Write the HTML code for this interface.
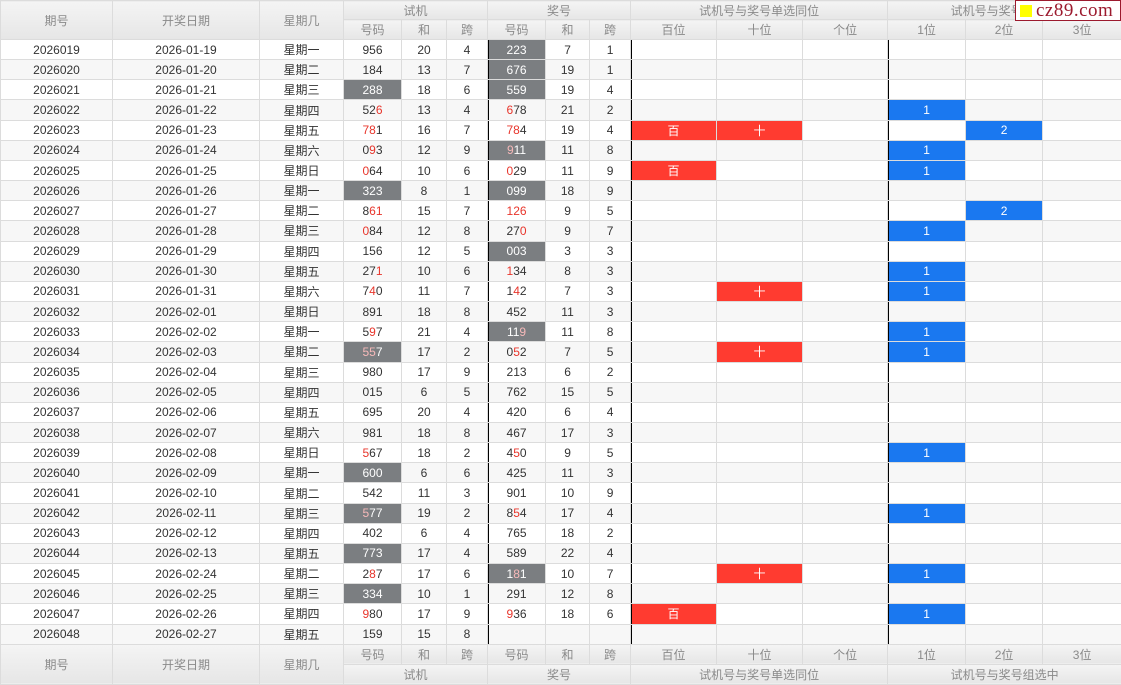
<!DOCTYPE html>
<html><head><meta charset="utf-8"><style>
*{margin:0;padding:0;box-sizing:border-box}
body{width:1121px;height:684px;overflow:hidden;background:#fff;font-family:"Liberation Sans","Noto Sans CJK SC",sans-serif;font-size:12px;color:#333;position:relative}
table{border-collapse:collapse;table-layout:fixed;width:1121px}
td,th{border:1px solid #dcdcdc;text-align:center;padding:0;white-space:nowrap;overflow:hidden}
th{background:linear-gradient(#f4f4f4,#e6e6e6);color:#8a8a8a;font-weight:normal;font-size:12px}
thead tr.a th{height:19px}
thead tr.b th{height:20px}
tbody tr{height:20.17px}
tbody tr:nth-child(even) td{background:#f7f7f7}
tfoot tr th{height:20px}
tbody td.g{background:#7b7e81!important;color:#fff}
tbody td.R{background:#ff3b30!important;color:#fff}
tbody td.B{background:#1a78f0!important;color:#fff}
.r{color:#e8352b}
td.g .r{color:#f7b9b9}
td.k{box-shadow:inset 1px 0 0 #000}
#wm{position:absolute;left:1015px;top:0;width:106px;height:21px;background:#fff;border:1px solid #9c1a2e;font-family:"Liberation Serif",serif;font-size:19px;color:#9c1a2e;line-height:19px;padding-left:20px;letter-spacing:0.5px}
#wm i{position:absolute;left:4px;top:4px;width:12px;height:12px;background:#ff0}
</style></head><body>
<table>
<colgroup><col style="width:112px"><col style="width:147px"><col style="width:84px"><col style="width:58px"><col style="width:45px"><col style="width:41px"><col style="width:58px"><col style="width:44px"><col style="width:41px"><col style="width:86px"><col style="width:86px"><col style="width:85px"><col style="width:78px"><col style="width:77px"><col style="width:79px"></colgroup>
<thead>
<tr class="a"><th rowspan="2">期号</th><th rowspan="2">开奖日期</th><th rowspan="2">星期几</th><th colspan="3">试机</th><th colspan="3">奖号</th><th colspan="3">试机号与奖号单选同位</th><th colspan="3">试机号与奖号组选中</th></tr>
<tr class="b"><th>号码</th><th>和</th><th>跨</th><th>号码</th><th>和</th><th>跨</th><th>百位</th><th>十位</th><th>个位</th><th>1位</th><th>2位</th><th>3位</th></tr>
</thead>
<tbody>
<tr><td>2026019</td><td>2026-01-19</td><td>星期一</td><td>956</td><td>20</td><td>4</td><td class="k g">223</td><td>7</td><td>1</td><td class="k"></td><td></td><td></td><td class="k"></td><td></td><td></td></tr>
<tr><td>2026020</td><td>2026-01-20</td><td>星期二</td><td>184</td><td>13</td><td>7</td><td class="k g">676</td><td>19</td><td>1</td><td class="k"></td><td></td><td></td><td class="k"></td><td></td><td></td></tr>
<tr><td>2026021</td><td>2026-01-21</td><td>星期三</td><td class="g">288</td><td>18</td><td>6</td><td class="k g">559</td><td>19</td><td>4</td><td class="k"></td><td></td><td></td><td class="k"></td><td></td><td></td></tr>
<tr><td>2026022</td><td>2026-01-22</td><td>星期四</td><td>52<span class="r">6</span></td><td>13</td><td>4</td><td class="k"><span class="r">6</span>78</td><td>21</td><td>2</td><td class="k"></td><td></td><td></td><td class="k B">1</td><td></td><td></td></tr>
<tr><td>2026023</td><td>2026-01-23</td><td>星期五</td><td><span class="r">78</span>1</td><td>16</td><td>7</td><td class="k"><span class="r">78</span>4</td><td>19</td><td>4</td><td class="k R">百</td><td class="R">十</td><td></td><td class="k"></td><td class="B">2</td><td></td></tr>
<tr><td>2026024</td><td>2026-01-24</td><td>星期六</td><td>0<span class="r">9</span>3</td><td>12</td><td>9</td><td class="k g"><span class="r">9</span>11</td><td>11</td><td>8</td><td class="k"></td><td></td><td></td><td class="k B">1</td><td></td><td></td></tr>
<tr><td>2026025</td><td>2026-01-25</td><td>星期日</td><td><span class="r">0</span>64</td><td>10</td><td>6</td><td class="k"><span class="r">0</span>29</td><td>11</td><td>9</td><td class="k R">百</td><td></td><td></td><td class="k B">1</td><td></td><td></td></tr>
<tr><td>2026026</td><td>2026-01-26</td><td>星期一</td><td class="g">323</td><td>8</td><td>1</td><td class="k g">099</td><td>18</td><td>9</td><td class="k"></td><td></td><td></td><td class="k"></td><td></td><td></td></tr>
<tr><td>2026027</td><td>2026-01-27</td><td>星期二</td><td>8<span class="r">61</span></td><td>15</td><td>7</td><td class="k"><span class="r">126</span></td><td>9</td><td>5</td><td class="k"></td><td></td><td></td><td class="k"></td><td class="B">2</td><td></td></tr>
<tr><td>2026028</td><td>2026-01-28</td><td>星期三</td><td><span class="r">0</span>84</td><td>12</td><td>8</td><td class="k">27<span class="r">0</span></td><td>9</td><td>7</td><td class="k"></td><td></td><td></td><td class="k B">1</td><td></td><td></td></tr>
<tr><td>2026029</td><td>2026-01-29</td><td>星期四</td><td>156</td><td>12</td><td>5</td><td class="k g">003</td><td>3</td><td>3</td><td class="k"></td><td></td><td></td><td class="k"></td><td></td><td></td></tr>
<tr><td>2026030</td><td>2026-01-30</td><td>星期五</td><td>27<span class="r">1</span></td><td>10</td><td>6</td><td class="k"><span class="r">1</span>34</td><td>8</td><td>3</td><td class="k"></td><td></td><td></td><td class="k B">1</td><td></td><td></td></tr>
<tr><td>2026031</td><td>2026-01-31</td><td>星期六</td><td>7<span class="r">4</span>0</td><td>11</td><td>7</td><td class="k">1<span class="r">4</span>2</td><td>7</td><td>3</td><td class="k"></td><td class="R">十</td><td></td><td class="k B">1</td><td></td><td></td></tr>
<tr><td>2026032</td><td>2026-02-01</td><td>星期日</td><td>891</td><td>18</td><td>8</td><td class="k">452</td><td>11</td><td>3</td><td class="k"></td><td></td><td></td><td class="k"></td><td></td><td></td></tr>
<tr><td>2026033</td><td>2026-02-02</td><td>星期一</td><td>5<span class="r">9</span>7</td><td>21</td><td>4</td><td class="k g">11<span class="r">9</span></td><td>11</td><td>8</td><td class="k"></td><td></td><td></td><td class="k B">1</td><td></td><td></td></tr>
<tr><td>2026034</td><td>2026-02-03</td><td>星期二</td><td class="g"><span class="r">55</span>7</td><td>17</td><td>2</td><td class="k">0<span class="r">5</span>2</td><td>7</td><td>5</td><td class="k"></td><td class="R">十</td><td></td><td class="k B">1</td><td></td><td></td></tr>
<tr><td>2026035</td><td>2026-02-04</td><td>星期三</td><td>980</td><td>17</td><td>9</td><td class="k">213</td><td>6</td><td>2</td><td class="k"></td><td></td><td></td><td class="k"></td><td></td><td></td></tr>
<tr><td>2026036</td><td>2026-02-05</td><td>星期四</td><td>015</td><td>6</td><td>5</td><td class="k">762</td><td>15</td><td>5</td><td class="k"></td><td></td><td></td><td class="k"></td><td></td><td></td></tr>
<tr><td>2026037</td><td>2026-02-06</td><td>星期五</td><td>695</td><td>20</td><td>4</td><td class="k">420</td><td>6</td><td>4</td><td class="k"></td><td></td><td></td><td class="k"></td><td></td><td></td></tr>
<tr><td>2026038</td><td>2026-02-07</td><td>星期六</td><td>981</td><td>18</td><td>8</td><td class="k">467</td><td>17</td><td>3</td><td class="k"></td><td></td><td></td><td class="k"></td><td></td><td></td></tr>
<tr><td>2026039</td><td>2026-02-08</td><td>星期日</td><td><span class="r">5</span>67</td><td>18</td><td>2</td><td class="k">4<span class="r">5</span>0</td><td>9</td><td>5</td><td class="k"></td><td></td><td></td><td class="k B">1</td><td></td><td></td></tr>
<tr><td>2026040</td><td>2026-02-09</td><td>星期一</td><td class="g">600</td><td>6</td><td>6</td><td class="k">425</td><td>11</td><td>3</td><td class="k"></td><td></td><td></td><td class="k"></td><td></td><td></td></tr>
<tr><td>2026041</td><td>2026-02-10</td><td>星期二</td><td>542</td><td>11</td><td>3</td><td class="k">901</td><td>10</td><td>9</td><td class="k"></td><td></td><td></td><td class="k"></td><td></td><td></td></tr>
<tr><td>2026042</td><td>2026-02-11</td><td>星期三</td><td class="g"><span class="r">5</span>77</td><td>19</td><td>2</td><td class="k">8<span class="r">5</span>4</td><td>17</td><td>4</td><td class="k"></td><td></td><td></td><td class="k B">1</td><td></td><td></td></tr>
<tr><td>2026043</td><td>2026-02-12</td><td>星期四</td><td>402</td><td>6</td><td>4</td><td class="k">765</td><td>18</td><td>2</td><td class="k"></td><td></td><td></td><td class="k"></td><td></td><td></td></tr>
<tr><td>2026044</td><td>2026-02-13</td><td>星期五</td><td class="g">773</td><td>17</td><td>4</td><td class="k">589</td><td>22</td><td>4</td><td class="k"></td><td></td><td></td><td class="k"></td><td></td><td></td></tr>
<tr><td>2026045</td><td>2026-02-24</td><td>星期二</td><td>2<span class="r">8</span>7</td><td>17</td><td>6</td><td class="k g">1<span class="r">8</span>1</td><td>10</td><td>7</td><td class="k"></td><td class="R">十</td><td></td><td class="k B">1</td><td></td><td></td></tr>
<tr><td>2026046</td><td>2026-02-25</td><td>星期三</td><td class="g">334</td><td>10</td><td>1</td><td class="k">291</td><td>12</td><td>8</td><td class="k"></td><td></td><td></td><td class="k"></td><td></td><td></td></tr>
<tr><td>2026047</td><td>2026-02-26</td><td>星期四</td><td><span class="r">9</span>80</td><td>17</td><td>9</td><td class="k"><span class="r">9</span>36</td><td>18</td><td>6</td><td class="k R">百</td><td></td><td></td><td class="k B">1</td><td></td><td></td></tr>
<tr><td>2026048</td><td>2026-02-27</td><td>星期五</td><td>159</td><td>15</td><td>8</td><td class="k"></td><td></td><td></td><td class="k"></td><td></td><td></td><td class="k"></td><td></td><td></td></tr>
</tbody>
<tfoot>
<tr><th rowspan="2">期号</th><th rowspan="2">开奖日期</th><th rowspan="2">星期几</th><th>号码</th><th>和</th><th>跨</th><th>号码</th><th>和</th><th>跨</th><th>百位</th><th>十位</th><th>个位</th><th>1位</th><th>2位</th><th>3位</th></tr>
<tr><th colspan="3">试机</th><th colspan="3">奖号</th><th colspan="3">试机号与奖号单选同位</th><th colspan="3">试机号与奖号组选中</th></tr>
</tfoot>
</table>
<div id="wm"><i></i>cz89.com</div>
</body></html>
